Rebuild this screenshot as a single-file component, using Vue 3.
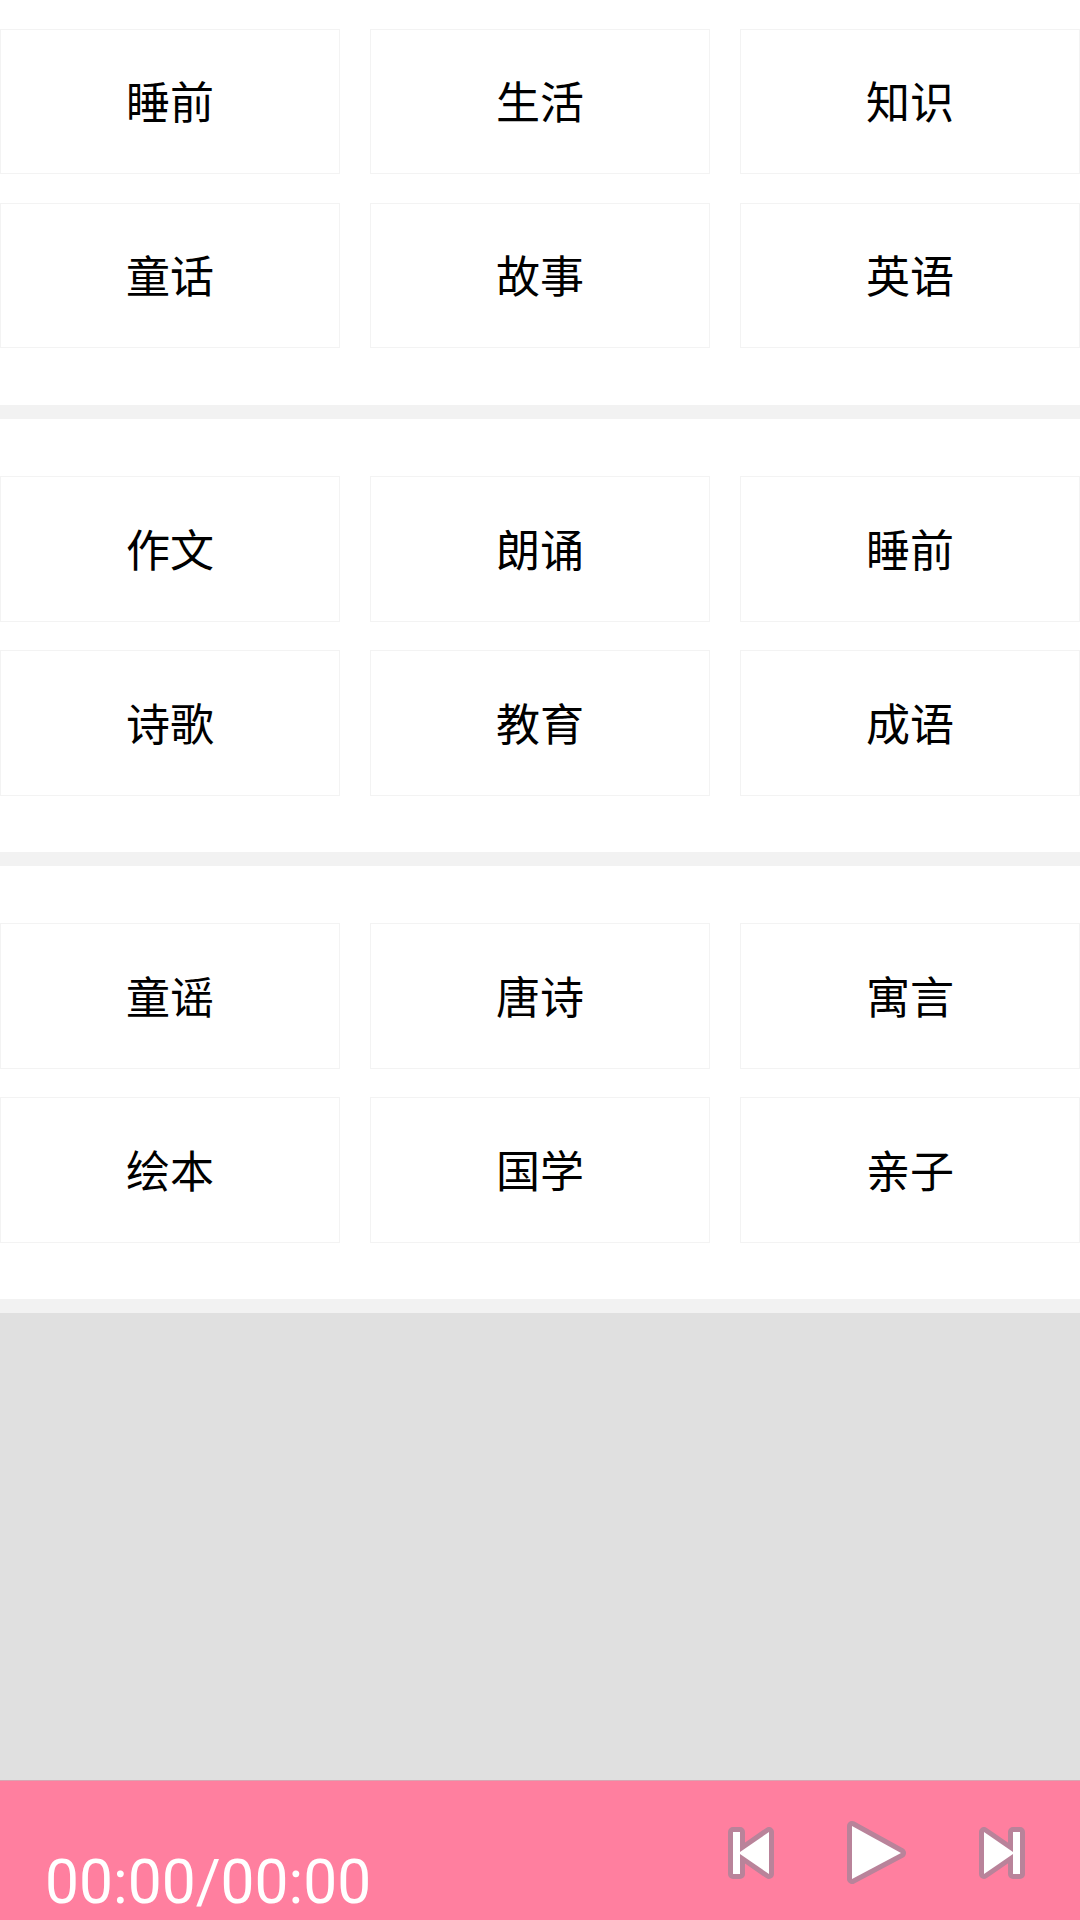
<template>
  <div class="page">
    <div class="list">
      <section v-for="(group, i) in groups" :key="i" class="group" :class="{ first: i === 0 }">
        <div v-for="(name, j) in group" :key="j" class="tile">{{ name }}</div>
      </section>
    </div>
    <div class="empty"></div>
    <footer class="player">
      <span class="time">00:00/00:00</span>
      <div class="controls">
        <svg class="ctl" width="47" height="52" viewBox="0 0 47 52" aria-hidden="true">
          <path d="M5 5H12V25L41 5V47L12 27V47H5Z" />
        </svg>
        <svg class="ctl" width="60" height="63" viewBox="0 0 60 63" aria-hidden="true">
          <path d="M5 5L54 32L5 58Z" />
        </svg>
        <svg class="ctl" width="46" height="52" viewBox="0 0 46 52" aria-hidden="true">
          <path d="M41 5H34V25L5 5V47L34 27V47H41Z" />
        </svg>
      </div>
    </footer>
  </div>
</template>

<script setup>
const groups = [
  ['睡前', '生活', '知识', '童话', '故事', '英语'],
  ['作文', '朗诵', '睡前', '诗歌', '教育', '成语'],
  ['童谣', '唐诗', '寓言', '绘本', '国学', '亲子'],
]
</script>

<style scoped>
.page { width: 1080px; height: 1920px; display: flex; flex-direction: column; overflow: hidden; background: #fff; font-family: "Noto Sans CJK SC", "Noto Sans", sans-serif; }
.group { box-sizing: border-box; height: 447px; padding: 57px 0; display: grid; grid-template-columns: repeat(3, 1fr); grid-auto-rows: 146px; column-gap: 30px; row-gap: 28px; border-bottom: 14px solid #f2f2f2; }
.group.first { height: 419px; padding-top: 29px; grid-auto-rows: 145px; row-gap: 29px; }
.tile { box-sizing: border-box; display: flex; align-items: center; justify-content: center; padding-bottom: 3px; border: 1px solid #f3f3f3; color: #000; font-size: 44px; font-weight: 400; }
.empty { flex: 1; background: #e0e0e0; }
.player { height: 140px; flex: none; display: flex; justify-content: space-between; padding: 0 55px 0 45px; background: #ff7f9f; border-top: 1px solid #d9a5b2; box-sizing: border-box; }
.time { align-self: flex-end; padding-bottom: 7px; color: #fff; font-family: Roboto, sans-serif; font-size: 60.5px; line-height: 60px; }
.controls { display: flex; align-items: center; gap: 72px; padding-top: 4px; }
.ctl path { fill: #fff; stroke: #b9839a; stroke-width: 10; stroke-linejoin: round; paint-order: stroke; }
</style>
